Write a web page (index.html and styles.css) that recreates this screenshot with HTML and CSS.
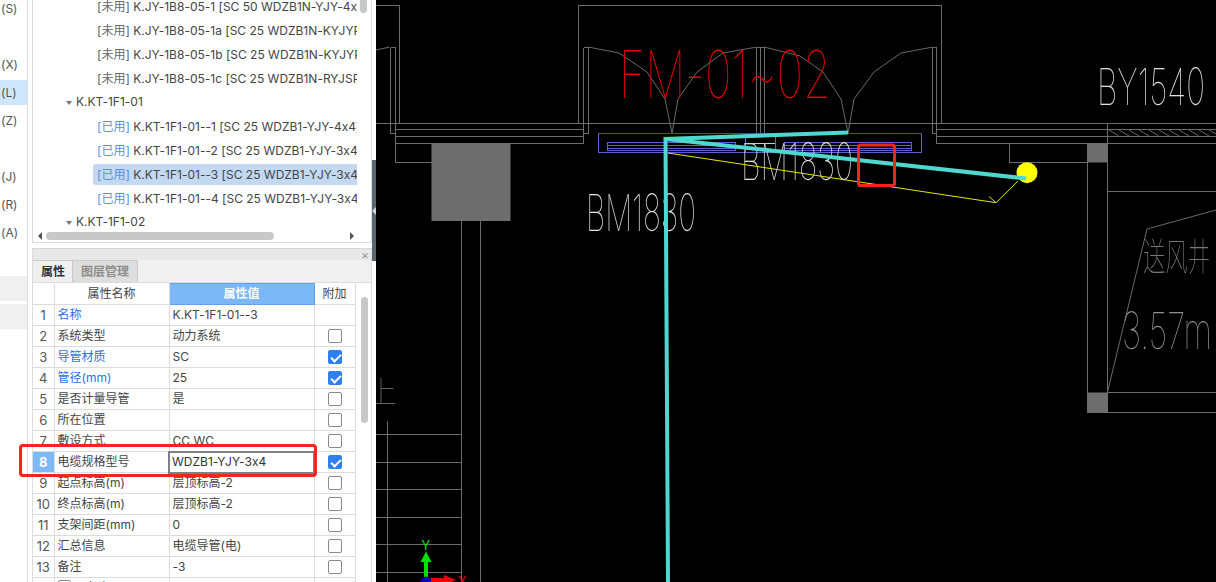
FILE: index.html
```html
<!DOCTYPE html>
<html lang="en">
<head>
    <meta charset="UTF-8">
    <meta name="viewport" content="width=device-width, initial-scale=1.0">
    <title>电缆导管属性</title>
    <link rel="stylesheet" href="styles.css">
</head>
<body>
    <div class="app">
        <div class="rail">
            <div class="rail-item">(S)</div>
            <div class="rail-item"></div>
            <div class="rail-item">(X)</div>
            <div class="rail-item active">(L)</div>
            <div class="rail-item">(Z)</div>
            <div class="rail-item"></div>
            <div class="rail-item">(J)</div>
            <div class="rail-item">(R)</div>
            <div class="rail-item">(A)</div>
            <div class="rail-item"></div>
            <div class="rail-item muted"></div>
            <div class="rail-item muted"></div>
        </div>

        <div class="side">
            <div class="tree-panel">
                <div class="tree-body">
                    <div class="tree-list">
                        <div class="leaf"><div class="leaf-inner"><span class="unused">[未用]</span> K.JY-1B8-05-1 [SC 50 WDZB1N-YJY-4x1</div></div>
                        <div class="leaf"><div class="leaf-inner"><span class="unused">[未用]</span> K.JY-1B8-05-1a [SC 25 WDZB1N-KYJYP</div></div>
                        <div class="leaf"><div class="leaf-inner"><span class="unused">[未用]</span> K.JY-1B8-05-1b [SC 25 WDZB1N-KYJYP</div></div>
                        <div class="leaf"><div class="leaf-inner"><span class="unused">[未用]</span> K.JY-1B8-05-1c [SC 25 WDZB1N-RYJSP</div></div>
                        <div class="node"><span class="caret"></span>K.KT-1F1-01</div>
                        <div class="leaf"><div class="leaf-inner"><span class="used">[已用]</span> K.KT-1F1-01--1 [SC 25 WDZB1-YJY-4x4]</div></div>
                        <div class="leaf"><div class="leaf-inner"><span class="used">[已用]</span> K.KT-1F1-01--2 [SC 25 WDZB1-YJY-3x4]</div></div>
                        <div class="leaf selected"><div class="leaf-inner"><span class="used">[已用]</span> K.KT-1F1-01--3 [SC 25 WDZB1-YJY-3x4]</div></div>
                        <div class="leaf"><div class="leaf-inner"><span class="used">[已用]</span> K.KT-1F1-01--4 [SC 25 WDZB1-YJY-3x4]</div></div>
                        <div class="node"><span class="caret"></span>K.KT-1F1-02</div>
                    </div>
                    <div class="tree-vscroll"></div>
                </div>
                <div class="tree-hscroll">
                    <span class="arrow-left"></span>
                    <div class="hscroll-thumb"></div>
                    <span class="arrow-right"></span>
                </div>
            </div>

            <div class="prop-panel">
                <div class="prop-head"><span class="prop-close">×</span></div>
                <div class="tabs">
                    <div class="tab active">属性</div>
                    <div class="tab">图层管理</div>
                </div>
                <div class="prop-body">
                    <table class="prop-table">
                        <colgroup>
                            <col class="col-num">
                            <col class="col-name">
                            <col class="col-value">
                            <col class="col-extra">
                        </colgroup>
                        <tr class="head-row">
                            <th></th><th>属性名称</th><th class="value-head">属性值</th><th>附加</th>
                        </tr>
                        <tr><td class="num">1</td><td class="blue">名称</td><td>K.KT-1F1-01--3</td><td></td></tr>
                        <tr><td class="num">2</td><td>系统类型</td><td>动力系统</td><td><span class="check"></span></td></tr>
                        <tr><td class="num">3</td><td class="blue">导管材质</td><td>SC</td><td><span class="check on"></span></td></tr>
                        <tr><td class="num">4</td><td class="blue">管径(mm)</td><td>25</td><td><span class="check on"></span></td></tr>
                        <tr><td class="num">5</td><td>是否计量导管</td><td>是</td><td><span class="check"></span></td></tr>
                        <tr><td class="num">6</td><td>所在位置</td><td></td><td><span class="check"></span></td></tr>
                        <tr><td class="num">7</td><td>敷设方式</td><td>CC,WC</td><td><span class="check"></span></td></tr>
                        <tr><td class="num current">8</td><td>电缆规格型号</td><td class="editing">WDZB1-YJY-3x4</td><td><span class="check on"></span></td></tr>
                        <tr><td class="num">9</td><td>起点标高(m)</td><td>层顶标高-2</td><td><span class="check"></span></td></tr>
                        <tr><td class="num">10</td><td>终点标高(m)</td><td>层顶标高-2</td><td><span class="check"></span></td></tr>
                        <tr><td class="num">11</td><td>支架间距(mm)</td><td>0</td><td><span class="check"></span></td></tr>
                        <tr><td class="num">12</td><td>汇总信息</td><td>电缆导管(电)</td><td><span class="check"></span></td></tr>
                        <tr><td class="num">13</td><td>备注</td><td>-3</td><td><span class="check"></span></td></tr>
                        <tr><td class="num"></td><td><span class="group-box"></span>土建</td><td></td><td></td></tr>
                    </table>
                    <div class="prop-scroll"><div class="prop-thumb"></div></div>
                </div>
            </div>
        </div>

        <div class="splitter"><div class="splitter-grip"></div></div>

        <svg class="canvas" viewBox="376 0 840 582" xmlns="http://www.w3.org/2000/svg">
            <!-- walls -->
            <g class="wall">
                <path d="M376 5.5H399.5V123.5"/>
                <path d="M578.5 123.5V5.5H941.5V123.5"/>
                <path d="M376 123.5H1216"/>
                <path d="M395.5 129.5H583.5M395.5 136.5H583.5M395.5 143.5H583.5"/>
                <path d="M395.5 47.5V162.5H431.5"/>
                <path d="M390.5 47.5V133.5H395.5M390.5 47.5H395.5"/>
                <path d="M583.5 47.5V143.5M583.5 47.5H588.5V133.5H583.5"/>
                <path d="M756.5 47.5V133.5M760.5 47.5V133.5M764.5 47.5V133.5M756.5 47.5H764.5"/>
                <path d="M932.5 47.5V133.5H936.5M932.5 47.5H936.5V143.5"/>
                <path d="M936.5 129.5H1216M936.5 136.5H1216M936.5 143.5H1216"/>
                <path d="M1009.5 143.5V162.5H1087.5"/>
                <path d="M1107.5 123.5V412.5M1087.5 143.5V412.5"/>
                <path d="M1107.5 191.5H1216M1107.5 392.5H1216M1087.5 412.5H1216"/>
                <path d="M461.5 221V582M480.5 221V582"/>
                <path d="M376 434.5H461M376 462.5H461M376 489.5H461M376 517.5H461M376 544.5H461M376 572.5H461"/>
                <path d="M387.5 421V582"/>
            </g>
            <g class="fill-block">
                <rect x="431.5" y="143" width="79" height="78"/>
                <rect x="1088" y="143" width="19.5" height="19.5"/>
                <rect x="1088" y="392.5" width="19.5" height="20"/>
            </g>
            <!-- door swings -->
            <g class="swing">
                <path d="M376 50L390 47"/>
                <path d="M588 47L619 53L647 72L665 99L672 133L678 99L697 72L723 53L757 47"/>
                <path d="M764 47L800 56L823 72L841 99L848 133L854 99L874 72L901 53L933 47"/>
                <path d="M1147 229L1216 210M1147 229L1107.5 392"/>
            </g>
            <path class="hatch" d="M1109 130L1119 136M1119 130L1129 136M1129 130L1139 136M1139 130L1149 136M1149 130L1159 136M1159 130L1169 136M1169 130L1179 136M1179 130L1189 136M1189 130L1199 136M1199 130L1209 136M1209 130L1216 134"/>

            <text class="cad-red" x="619" y="98" textLength="212" lengthAdjust="spacingAndGlyphs">FM-01~02</text>

            <!-- door leaf blocks -->
            <g class="door-block">
                <rect x="598.5" y="133.5" width="323" height="19"/>
                <path d="M745.5 133.5V152.5M775.5 133.5V152.5"/>
                <rect x="607.5" y="142.5" width="128" height="8"/>
                <rect x="784.5" y="142.5" width="127" height="8"/>
                <path d="M607.5 145H735.5M607.5 148H735.5M784.5 145H911.5M784.5 148H911.5"/>
                <path class="door-top" d="M598.5 133.5H921.5"/>
            </g>

            <text class="cad-white" x="586" y="231" textLength="110" lengthAdjust="spacingAndGlyphs">BM1830</text>
            <text class="cad-white" x="741" y="180" textLength="112" lengthAdjust="spacingAndGlyphs">BM1830</text>
            <text class="cad-white" x="1097" y="104.5" textLength="108" lengthAdjust="spacingAndGlyphs">BY1540</text>
            <text class="cad-grey cad-cjk" x="1143" y="270" textLength="67" lengthAdjust="spacingAndGlyphs">送风井</text>
            <text class="cad-grey" x="1122" y="349" textLength="90" lengthAdjust="spacingAndGlyphs">3.57m</text>
            <text class="cad-dim" x="367" y="402">上</text>

            <!-- leader -->
            <path class="leader" d="M745.5 143.5H775M668 153L996 202.7L1018 181M989 196.5L996 202.7"/>
            <circle class="joint" cx="1027" cy="172.7" r="10.5"/>

            <!-- cable runs -->
            <g class="cable">
                <path d="M668 582L665.5 139L848 132.5"/>
                <path d="M665.5 139L1026 178.5"/>
            </g>

            <rect class="mark" x="858.5" y="145" width="36" height="40.5" rx="2"/>

            <!-- axis gizmo -->
            <g class="axis-y">
                <rect x="424" y="561" width="4" height="16"/>
                <path d="M426 551.5L431.5 562H420.5Z"/>
                <text class="axis-label" x="425.8" y="550">Y</text>
            </g>
            <g class="axis-x">
                <rect x="430" y="578" width="15" height="4"/>
                <path d="M456 580L444 575V585Z"/>
                <text class="axis-label" x="462" y="586">X</text>
            </g>
            <circle class="axis-o" cx="426" cy="582" r="5.5"/>
        </svg>

        <div class="row-mark"></div>
    </div>
</body>
</html>
```

FILE: styles.css
```css
* {
    margin: 0;
    padding: 0;
    box-sizing: border-box;
}

body {
    font-family: 'Inter', 'Noto Sans CJK SC', sans-serif;
    font-size: 12px;
    font-feature-settings: 'calt' 0;
    color: #444;
    background: #fff;
    overflow: hidden;
}

.app {
    position: relative;
    display: flex;
    width: 1216px;
    height: 582px;
    overflow: hidden;
}

/* left rail */
.rail {
    width: 28px;
    flex-shrink: 0;
    border-right: 1px solid #dcdcdc;
    margin-top: -4px;
}

.rail-item {
    height: 25px;
    margin-bottom: 3px;
    line-height: 25px;
    padding-left: 1px;
    color: #555;
}

.rail-item.active {
    background: #cfe5fb;
}

.rail-item.muted {
    background: #f0f0f0;
}

.side {
    width: 344px;
    flex-shrink: 0;
    padding-left: 4px;
    display: flex;
    flex-direction: column;
}

/* tree */
.tree-panel {
    height: 243px;
    flex-shrink: 0;
    border: 1px solid #dcdcdc;
    border-top: 0;
    display: flex;
    flex-direction: column;
}

.tree-body {
    height: 232px;
    display: flex;
    overflow: hidden;
}

.tree-list {
    width: 324px;
    margin-top: -6px;
    overflow: hidden;
}

.leaf {
    height: 24px;
    padding-left: 60px;
    display: flex;
    align-items: center;
}

.leaf-inner {
    flex: 1;
    height: 21px;
    line-height: 21px;
    padding-left: 4px;
    white-space: nowrap;
    overflow: hidden;
    border-radius: 3px 0 0 3px;
}

.leaf.selected .leaf-inner {
    background: #c3d9f2;
}

.unused {
    color: #666;
}

.used {
    color: #5b8fe0;
}

.node {
    height: 24px;
    line-height: 24px;
    padding-left: 33px;
    white-space: nowrap;
}

.caret {
    display: inline-block;
    width: 0;
    height: 0;
    margin-right: 4px;
    vertical-align: 1px;
    border-left: 3.5px solid transparent;
    border-right: 3.5px solid transparent;
    border-top: 4px solid #777;
}

.tree-vscroll {
    width: 7px;
    height: 13px;
    margin-left: 3px;
    background: #c8c8c8;
    border-radius: 0 0 4px 4px;
}

.tree-hscroll {
    height: 8px;
    display: flex;
    align-items: center;
    padding: 0 17px 0 5px;
}

.hscroll-thumb {
    width: 228px;
    height: 8px;
    margin-left: 4px;
    background: #c8c8c8;
    border-radius: 4px;
}

.arrow-left,
.arrow-right {
    width: 0;
    height: 0;
    border-top: 4px solid transparent;
    border-bottom: 4px solid transparent;
}

.arrow-left {
    border-right: 4px solid #555;
}

.arrow-right {
    margin-left: auto;
    border-left: 4px solid #555;
}

/* property panel */
.prop-panel {
    margin-top: 5px;
    flex: 1;
    display: flex;
    flex-direction: column;
    border-left: 1px solid #dcdcdc;
    border-right: 1px solid #dcdcdc;
    min-height: 0;
}

.prop-head {
    height: 12px;
    flex-shrink: 0;
    background: #e8e8e8;
    border-top: 1px solid #d8d8d8;
    display: flex;
    justify-content: flex-end;
    align-items: center;
    padding-right: 2px;
}

.prop-close {
    color: #999;
    font-size: 12px;
    line-height: 10px;
}

.tabs {
    height: 22px;
    flex-shrink: 0;
    display: flex;
    background: #f0f0f0;
}

.tab {
    padding: 0 8px;
    line-height: 21px;
    font-weight: 700;
    white-space: nowrap;
    color: #8c8c8c;
    background: #dedede;
    border: 1px solid #cacaca;
    border-bottom: 0;
    border-left: 0;
}

.tab.active {
    width: 40px;
    padding-right: 0;
    color: #333;
    background: #f0f0f0;
}

.prop-body {
    flex: 1;
    display: flex;
    overflow: hidden;
    border-top: 1px solid #dcdcdc;
}

.prop-table {
    width: 322px;
    height: max-content;
    table-layout: fixed;
    border-collapse: collapse;
}

.col-num {
    width: 21px;
}

.col-name {
    width: 115px;
}

.col-value {
    width: 145px;
}

.col-extra {
    width: 41px;
}

.prop-table tr {
    height: 21px;
}

.prop-table th,
.prop-table td {
    height: 21px;
    border: 1px solid #dcdcdc;
    border-top: 0;
    padding: 0 3px;
    font-weight: 400;
    white-space: nowrap;
    overflow: hidden;
    line-height: 16px;
    vertical-align: middle;
}

.prop-table tr > :first-child {
    border-left: 0;
}

.prop-table th {
    text-align: center;
}

.prop-table td:last-child {
    text-align: center;
    padding: 0;
}

.prop-table .value-head {
    background: #7cb7f7;
    color: #fff;
    font-weight: 700;
    border: 1px solid #5ea3ef;
}

.prop-table .num {
    padding: 0;
    text-align: center;
    font-size: 13px;
    color: #555;
}

.prop-table .num.current {
    background: #7db8f7;
    color: #fff;
    font-weight: 700;
}

.blue {
    color: #2f6fe0;
}

.prop-table .editing {
    border: 2px solid #808080;
    padding-left: 2px;
    color: #333;
}

.check {
    display: block;
    width: 14px;
    height: 14px;
    margin: 0 auto;
    border: 1px solid #8a8a8a;
    border-radius: 2px;
    background: #fff;
    position: relative;
}

.check.on {
    background: #2f80ed;
    border-color: #2f80ed;
}

.check.on::after {
    content: '';
    position: absolute;
    left: 4px;
    top: 1px;
    width: 4px;
    height: 8px;
    border: solid #fff;
    border-width: 0 2px 2px 0;
    transform: rotate(45deg);
}

.group-box {
    display: inline-block;
    width: 13px;
    height: 13px;
    margin-right: 14px;
    vertical-align: top;
    border: 1px solid #8a8a8a;
    border-radius: 2px;
}

.prop-scroll {
    width: 16px;
    padding: 14px 0 0 5px;
}

.prop-thumb {
    width: 7px;
    height: 126px;
    background: #c8c8c8;
    border-radius: 4px;
}

/* splitter */
.splitter {
    width: 4px;
    flex-shrink: 0;
    padding-top: 160px;
}

.splitter-grip {
    height: 101px;
    background: #5b6770;
    position: relative;
}

.splitter-grip::after {
    content: '';
    position: absolute;
    left: 0;
    top: 47px;
    border-top: 4px solid transparent;
    border-bottom: 4px solid transparent;
    border-right: 4px solid #cfd3d6;
}

/* cad canvas */
.canvas {
    flex: 1;
    display: block;
    height: 582px;
    background: #000;
}

.wall path {
    fill: none;
    stroke: #6c6c6c;
    stroke-width: 1;
    shape-rendering: crispEdges;
}

.fill-block rect {
    fill: #6e6e6e;
}

.swing path {
    fill: none;
    stroke: #6a6a6a;
    stroke-width: 1;
}

.hatch {
    fill: none;
    stroke: #666;
    stroke-width: 1;
}

.canvas text {
    font-family: 'Inter', 'Noto Sans', sans-serif;
    font-weight: 100;
}

.canvas .cad-red {
    font-size: 66px;
    fill: #e00000;
}

.cad-white {
    font-size: 51px;
    fill: #e0e0e0;
    filter: grayscale(1);
}

.cad-grey {
    font-size: 51px;
    fill: #909090;
    filter: grayscale(1);
}

.canvas .cad-cjk {
    font-family: 'Noto Sans CJK SC', sans-serif;
    font-size: 38px;
    fill: #777;
}

.canvas .cad-dim {
    font-family: 'Noto Sans CJK SC', sans-serif;
    font-size: 30px;
    fill: #666;
    filter: grayscale(1);
}

.door-block rect,
.door-block path {
    fill: none;
    stroke: #5f5fd0;
    stroke-width: 1;
    shape-rendering: crispEdges;
}

.door-block .door-top {
    stroke: #46469a;
}

.leader {
    fill: none;
    stroke: #e6e600;
    stroke-width: 1;
}

.joint {
    fill: #ffff00;
}

.cable path {
    fill: none;
    stroke: #4ed8cf;
    stroke-width: 4;
}

.mark {
    fill: none;
    stroke: #f5241a;
    stroke-width: 3;
}

.axis-y {
    fill: #00e000;
}

.axis-x {
    fill: #f00000;
}

.axis-o {
    fill: #0000b0;
}

.canvas .axis-label {
    font-family: 'Noto Sans', sans-serif;
    font-size: 14px;
    font-weight: 400;
    text-anchor: middle;
}

/* red mark around row 8 */
.row-mark {
    position: absolute;
    left: 19px;
    top: 444px;
    width: 298px;
    height: 33px;
    border: 3px solid #f5241a;
    border-radius: 4px;
}
```
